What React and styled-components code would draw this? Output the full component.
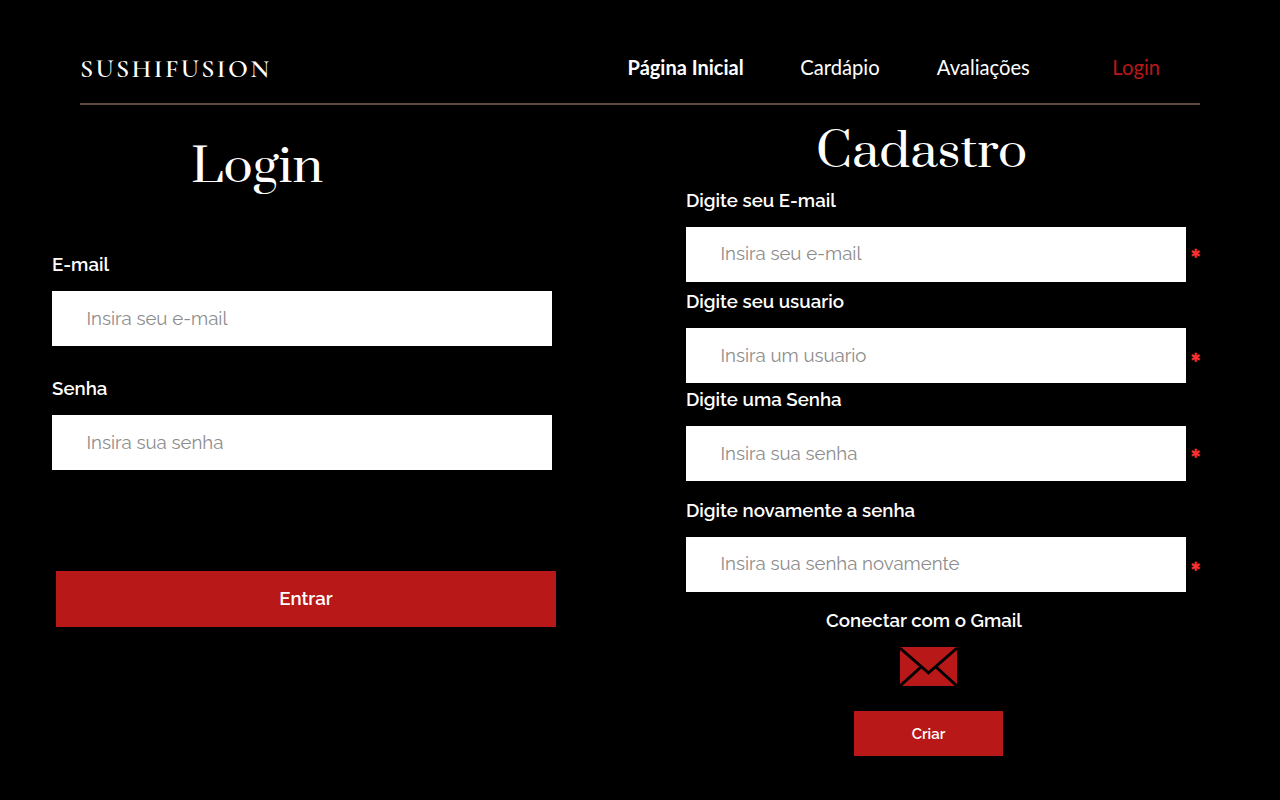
import React from "react";
import styled, { createGlobalStyle } from "styled-components";

const GlobalStyle = createGlobalStyle`
  *, *::before, *::after { box-sizing: border-box; }
  body { margin: 0; background: #000; color: #fff; }
`;

const sans = `Raleway, Lato, "Liberation Sans", sans-serif`;
const display = `Prata, "Gilda Display", "Liberation Serif", serif`;

const Page = styled.div`
  width: 1280px;
  height: 800px;
  overflow: hidden;
  background: #000;
  font-family: ${sans};
`;

const Header = styled.header`
  display: flex;
  align-items: flex-start;
  justify-content: space-between;
  height: 105px;
  margin: 0 80px;
  padding: 55px 40px 0 0;
  border-bottom: 2px solid #5c4a3e;
`;

const Logo = styled.div`
  font: 600 26px/28px Cormorant, "Liberation Serif", serif;
  letter-spacing: 2.4px;
`;

const Nav = styled.nav`
  display: flex;
  font: 400 20.2px/24px Lato, "Liberation Sans", sans-serif;
`;

const NavLink = styled.a`
  margin-left: ${(p) => p.$gap || 0}px;
  color: ${(p) => (p.$current ? "#b81818" : "#fff")};
  font-weight: ${(p) => (p.$strong ? 700 : 400)};
  font-size: ${(p) => (p.$strong ? 20 : 20.2)}px;
  white-space: nowrap;
`;

const Columns = styled.main`
  display: flex;
`;

const LoginPanel = styled.section`
  width: 634px;
  padding: 30px 0 0 52px;
`;

const SignupPanel = styled.section`
  width: 594px;
  padding: 15px 0 0 52px;
`;

const Title = styled.h1`
  height: ${(p) => p.$height}px;
  margin: 0 0 0 ${(p) => p.$indent}px;
  padding-top: 3px;
  font: 400 45.5px/60px ${display};
  white-space: nowrap;
  transform: scaleX(1.06);
  transform-origin: left;
`;

const Field = styled.label`
  display: block;
  margin-bottom: ${(p) => p.$after || 0}px;
`;

const Label = styled.span`
  display: block;
  height: 38.5px;
  font-size: 18.67px;
  font-weight: 600;
  line-height: 24px;
`;

const InputRow = styled.div`
  display: flex;
  height: 55.5px;
`;

const Input = styled.input`
  width: 500px;
  height: 100%;
  padding: 0 34px 2px 34.4px;
  border: 0;
  border-radius: 0;
  background: #fff;
  color: #222;
  font: 400 18.67px ${sans};
  &::placeholder { color: #8c8c8c; opacity: 1; }
`;

const Required = styled.span`
  margin: ${(p) => 20 + p.$drop}px 0 0 4.5px;
  color: #ff3131;
  font-family: Lato, "Liberation Sans", sans-serif;
  font-size: 24px;
  font-weight: 900;
  line-height: 24px;
  -webkit-text-stroke: 0.5px #ff3131;
`;

const Button = styled.button`
  width: ${(p) => (p.$small ? 149 : 500)}px;
  height: ${(p) => (p.$small ? 45 : 56)}px;
  padding: 0 0 ${(p) => (p.$small ? 0 : 2)}px;
  border: 0;
  background: #b81818;
  color: #fff;
  font: 600 ${(p) => (p.$small ? 15 : 18.67)}px ${sans};
`;

const LoginAction = styled.div`
  padding: 101px 0 0 4px;
`;

const Gmail = styled.div`
  display: flex;
  flex-direction: column;
  align-items: center;
  width: 485px;
`;

const GmailText = styled.p`
  margin: 0 0 15px;
  padding-right: 9px;
  font-size: 18.67px;
  font-weight: 600;
  line-height: 24px;
`;

const Envelope = styled.svg`
  display: block;
  margin-bottom: 25px;
`;

function FormField({ label, hint, type = "text", after, drop }) {
  return (
    <Field $after={after}>
      <Label>{label}</Label>
      <InputRow>
        <Input type={type} placeholder={hint} />
        {drop !== undefined && <Required $drop={drop}>*</Required>}
      </InputRow>
    </Field>
  );
}

export default function App() {
  return (
    <Page>
      <GlobalStyle />
      <Header>
        <Logo>SUSHIFUSION</Logo>
        <Nav>
          <NavLink $strong>Página Inicial</NavLink>
          <NavLink $gap={56.5}>Cardápio</NavLink>
          <NavLink $gap={57.2}>Avaliações</NavLink>
          <NavLink $gap={82.5} $current>Login</NavLink>
        </Nav>
      </Header>
      <Columns>
        <LoginPanel>
          <Title $indent={139} $height={117.3}>Login</Title>
          <FormField label="E-mail" hint="Insira seu e-mail" after={30} />
          <FormField label="Senha" hint="Insira sua senha" type="password" />
          <LoginAction>
            <Button>Entrar</Button>
          </LoginAction>
        </LoginPanel>
        <SignupPanel>
          <Title $indent={130} $height={68}>Cadastro</Title>
          <FormField label="Digite seu E-mail" hint="Insira seu e-mail" after={7.3} drop={0} />
          <FormField label="Digite seu usuario" hint="Insira um usuario" after={4} drop={3.7} />
          <FormField label="Digite uma Senha" hint="Insira sua senha" type="password" after={16.8} drop={1} />
          <FormField label="Digite novamente a senha" hint="Insira sua senha novamente" type="password" after={16} drop={3} />
          <Gmail>
            <GmailText>Conectar com o Gmail</GmailText>
            <Envelope width="57" height="39" viewBox="0 0 57 39">
              <rect width="57" height="39" fill="#b81818" />
              <path d="M0 1.2 L28.5 25.8 L57 1.2 M0 39 L21 20 M57 39 L36 20" fill="none" stroke="#000" strokeWidth="2.9" />
            </Envelope>
            <Button $small>Criar</Button>
          </Gmail>
        </SignupPanel>
      </Columns>
    </Page>
  );
}
